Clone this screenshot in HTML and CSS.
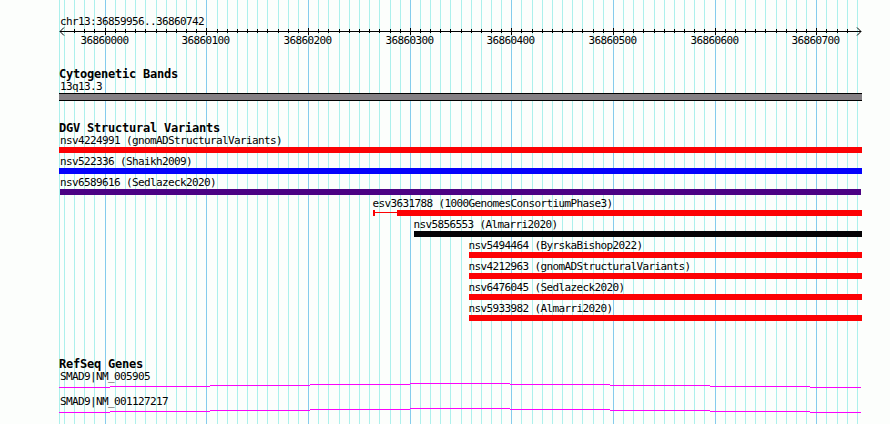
FILE: index.html
```html
<!DOCTYPE html>
<html>

<head>
    <meta charset="utf-8">
    <title>chr13:36859956..36860742</title>
    <link rel="stylesheet" href="styles.css">
</head>

<body>
    <div class="browser">
        <svg class="grid" width="890" height="424">
            <path id="minorLines" class="minor" />
            <path id="majorLines" class="major" />
        </svg>

        <div class="ruler">
            <div class="label">chr13:36859956..36860742</div>
            <svg class="scale" width="831" height="21">
                <path class="axis" d="M1 4.5H802" />
                <path class="arrow" d="M5 .5L1 4.5L5 8.5M798 .5L802 4.5L798 8.5" />
                <path id="ticks" class="axis" />
                <g id="scaleText"></g>
            </svg>
        </div>

        <div class="track cyto">
            <div class="title">Cytogenetic Bands</div>
            <div class="label">13q13.3</div>
            <div class="band"></div>
        </div>

        <div class="track variants">
            <div class="title">DGV Structural Variants</div>
            <div class="variant">
                <div class="label">nsv4224991 (gnomADStructuralVariants)</div>
                <div class="bar red"></div>
            </div>
            <div class="variant">
                <div class="label">nsv522336 (Shaikh2009)</div>
                <div class="bar blue"></div>
            </div>
            <div class="variant">
                <div class="label">nsv6589616 (Sedlazeck2020)</div>
                <div class="bar indigo"></div>
            </div>
            <div class="variant from-esv">
                <div class="label">esv3631788 (1000GenomesConsortiumPhase3)</div>
                <div class="range">
                    <div class="cap"></div>
                    <div class="whisker"></div>
                    <div class="bar red"></div>
                </div>
            </div>
            <div class="variant from-almarri">
                <div class="label">nsv5856553 (Almarri2020)</div>
                <div class="bar black"></div>
            </div>
            <div class="variant from-short">
                <div class="label">nsv5494464 (ByrskaBishop2022)</div>
                <div class="bar red"></div>
            </div>
            <div class="variant from-short">
                <div class="label">nsv4212963 (gnomADStructuralVariants)</div>
                <div class="bar red"></div>
            </div>
            <div class="variant from-short">
                <div class="label">nsv6476045 (Sedlazeck2020)</div>
                <div class="bar red"></div>
            </div>
            <div class="variant from-short">
                <div class="label">nsv5933982 (Almarri2020)</div>
                <div class="bar red"></div>
            </div>
        </div>

        <div class="track genes">
            <div class="title">RefSeq Genes</div>
            <div class="gene">
                <div class="label">SMAD9|NM_005905</div>
                <svg class="intron" width="803" height="5">
                    <path d="M0 4.5H51M51 3.5H151M151 2.5H251M251 1.5H351M351 .5H451M451 1.5H551M551 2.5H651M651 3.5H751M751 4.5H802" />
                </svg>
            </div>
            <div class="gene">
                <div class="label">SMAD9|NM_001127217</div>
                <svg class="intron" width="803" height="5">
                    <path d="M0 4.5H51M51 3.5H151M151 2.5H251M251 1.5H351M351 .5H451M451 1.5H551M551 2.5H651M651 3.5H751M751 4.5H802" />
                </svg>
            </div>
        </div>
    </div>
    <script src="grid.js"></script>
</body>

</html>
```
FILE: styles.css
```css
body {
    margin: 0;
    background: #fcfefc;
    color: #000;
    font-family: "DejaVu Sans Mono", "Liberation Mono", monospace;
}

.browser {
    position: relative;
    box-sizing: border-box;
    width: 890px;
    height: 424px;
    padding: 15px 28px 0 59px;
    overflow: hidden;
}

/* grid lines lie behind all tracks */
.grid {
    position: absolute;
    left: 0;
    top: 0;
    z-index: -1;
}

.grid path,
.axis,
.arrow {
    fill: none;
    stroke-width: 1;
}

.grid path,
.axis,
.intron path {
    shape-rendering: crispEdges;
}

.minor {
    stroke: #acf0ec;
}

.major {
    stroke: #84ccec;
}

.axis,
.arrow {
    stroke: #000;
}

svg {
    display: block;
}

.label,
.scale text {
    font-size: 11px;
    letter-spacing: -0.622px;
}

.label {
    height: 12px;
    padding-left: 1px;
    line-height: 11px;
    white-space: nowrap;
}

.ruler .label {
    line-height: 13px;
}

.title {
    height: 13px;
    font-size: 12px;
    font-weight: bold;
    line-height: 13px;
    letter-spacing: -0.224px;
}

.cyto {
    margin-top: 20px;
}

.band {
    box-sizing: border-box;
    height: 8px;
    border-top: 1px solid #000;
    border-bottom: 1px solid #000;
    background: #848084;
}

.variants {
    margin-top: 21px;
}

.variant {
    margin-bottom: 3px;
}

.bar {
    height: 6px;
}

.red {
    background: #fc0204;
}

.blue {
    background: #0402fc;
}

.indigo {
    margin: 0 1px;
    background: #4c0284;
}

.black {
    background: #040204;
}

.from-esv {
    margin-left: 314px;
}

.from-almarri {
    margin-left: 355px;
}

.from-short {
    margin-left: 410px;
}

.from-esv .label,
.from-almarri .label,
.from-short .label {
    padding-left: 0;
    margin-left: -0.5px;
}

.range {
    display: flex;
}

.range .bar {
    flex: 1;
}

.cap {
    width: 2px;
    height: 6px;
    background: #fc0204;
}

.whisker {
    width: 22px;
    height: 1px;
    margin-top: 2px;
    background: #fc0204;
}

.genes {
    margin-top: 37px;
}

.gene {
    margin-bottom: 8px;
}

.intron path {
    fill: none;
    stroke: #fc02fc;
    stroke-width: 1;
}
```
FILE: grid.js
```javascript
var left = 59;
var major = [105, 206, 308, 410, 511, 613, 715, 816];
var minor = [64, 74, 84, 94, 115, 125, 135, 145, 156, 166, 176, 186, 196,
    217, 227, 237, 247, 257, 267, 278, 288, 298, 318, 328, 339, 349, 359, 369, 379, 390, 400,
    420, 430, 440, 450, 461, 471, 481, 491, 501, 521, 532, 542, 552, 562, 572, 582, 593, 603,
    623, 633, 643, 654, 664, 674, 684, 694, 704, 725, 735, 745, 755, 765, 776, 786, 796, 806,
    826, 837, 847, 857];

function lines(xs, top, bottom, offset) {
    return xs.map(function (x) {
        return 'M' + (x + 0.5 - offset) + ' ' + top + 'V' + bottom;
    }).join('');
}

document.getElementById('minorLines').setAttribute('d', lines([left].concat(minor), 0, 424, 0));
document.getElementById('majorLines').setAttribute('d', lines(major, 0, 424, 0));
// no tick on the first and last minor line, the arrow heads are there
document.getElementById('ticks').setAttribute('d', lines(minor.slice(1, -1), 2, 6, left) + lines(major, 1, 8, left));

var scaleText = document.getElementById('scaleText');
major.forEach(function (x, i) {
    var text = document.createElementNS('http://www.w3.org/2000/svg', 'text');
    text.setAttribute('x', x - left - 24.5);
    text.setAttribute('y', 17);
    text.textContent = 36860000 + i * 100;
    scaleText.appendChild(text);
});
```
